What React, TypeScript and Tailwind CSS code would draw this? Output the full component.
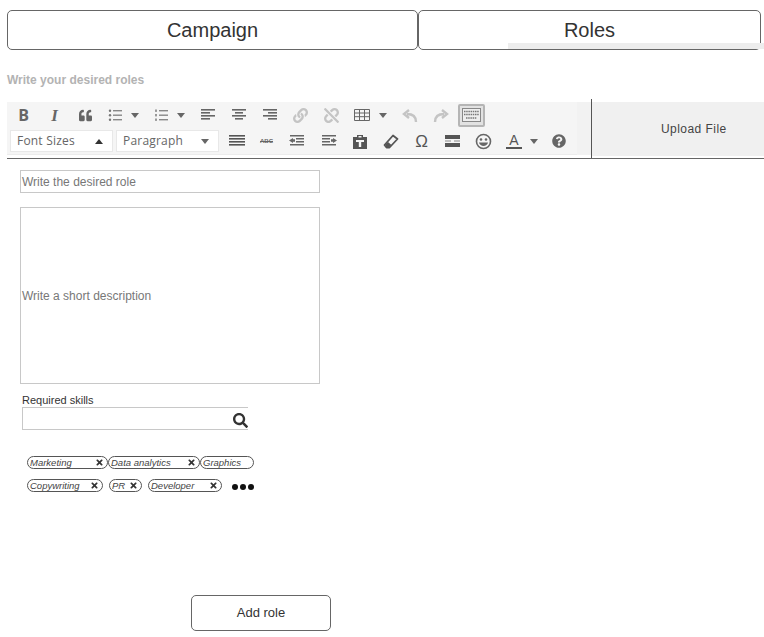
import { FaLink, FaUnlink, FaQuoteLeft, FaQuestionCircle, FaTimes, FaSearch } from "react-icons/fa";

function Lines({ rows, color = "#666" }: { rows: [number, number][]; color?: string }) {
    return (
        <svg width="16" height="14" viewBox="0 0 16 14">
            {rows.map((r, i) => (
                <rect key={i} x={r[0]} y={1 + i * 3} width={r[1]} height="1.6" fill={color} />
            ))}
        </svg>
    );
}

function Btn({ w = "w-[31px]", ml = "", children }: { w?: string; ml?: string; children: React.ReactNode }) {
    return <div className={`${w} ${ml} h-[24px] flex justify-center items-center shrink-0 text-[#666]`}>{children}</div>;
}

function Caret({ up }: { up?: boolean }) {
    return (
        <svg width="8" height="5" viewBox="0 0 8 5">
            <path d={up ? "M0 5 L4 0 L8 5 Z" : "M0 0 L8 0 L4 5 Z"} fill={up ? "#333" : "#666"} />
        </svg>
    );
}

function ListIcon({ numbered }: { numbered?: boolean }) {
    return (
        <svg width="14" height="13" viewBox="0 0 14 13">
            {[1, 5.5, 10].map((y) => (
                <g key={y}>
                    {numbered ? <rect x="1" y={y - 0.5} width="2" height="2.4" fill="#999" /> : <circle cx="2" cy={y + 0.7} r="1.2" fill="#777" />}
                    <rect x="5" y={y} width="9" height="1.4" fill="#888" />
                </g>
            ))}
        </svg>
    );
}

function Dropdown({ label, up, w }: { label: string; up?: boolean; w: string }) {
    return (
        <div className={`${w} h-[22px] bg-white border border-[#e8e8e8] flex items-center justify-between pl-[6px] pr-[9px] text-[12px] tracking-[0.2px] text-[#666] font-['Open_Sans',sans-serif] shrink-0`}>
            <span>{label}</span>
            <Caret up={up} />
        </div>
    );
}

function Arrow({ flip }: { flip?: boolean }) {
    return (
        <svg width="16" height="15" viewBox="0 0 16 15" className={flip ? "-scale-x-100" : ""}>
            <path d="M14 14 C14 8 10 6 5 6 M7 2 L2 6 L7 10" fill="none" stroke="#c4c4c4" strokeWidth="2.4" />
        </svg>
    );
}

function Indent({ flip }: { flip?: boolean }) {
    return (
        <svg width="16" height="14" viewBox="0 0 16 14" className={flip ? "-scale-x-100" : ""}>
            <rect x="1" y="1" width="14" height="1.5" fill="#666" />
            <rect x="7" y="4" width="8" height="1.5" fill="#666" />
            <rect x="7" y="7" width="8" height="1.5" fill="#666" />
            <rect x="1" y="10" width="14" height="1.5" fill="#666" />
            <path d="M0 6.5 L4 4 V5.3 H6 V7.7 H4 V9 Z" fill="#666" />
        </svg>
    );
}

function Tag({ label, w, close = true }: { label: string; w: string; close?: boolean }) {
    return (
        <div className={`${w} h-[13px] border border-[#555] rounded-full flex items-center justify-between pl-[2px] pr-[3px] text-[9.5px] italic text-[#444] shrink-0`}>
            <span className="mt-[1px]">{label}</span>
            {close && <FaTimes size={9} className="text-[#333]" />}
        </div>
    );
}

export default function App() {
    return (
        <div className="w-[764px] h-[637px] overflow-hidden bg-white font-['Liberation_Sans',Arial,sans-serif] text-[#333] pt-[10px]">
            <div className="flex pl-[7px]">
                <div className="w-[411px] h-[40px] border border-[#666] rounded-[5px] flex justify-center items-center text-[20px]">Campaign</div>
                <div className="relative w-[343px] h-[40px] border border-[#666] rounded-[5px] flex justify-center items-center text-[20px] pb-[1px]">
                    Roles
                    <div className="absolute left-[89px] top-[32px] w-[256px] h-[6px] bg-[#ededed]"></div>
                </div>
            </div>

            <p className="mt-[23px] pl-[7px] text-[12px] leading-[14px] font-bold text-[#b3b3b3]">Write your desired roles</p>

            <div className="mt-[12px] ml-[7px] flex h-[60px] border-b border-[#666]">
                <div className="w-[584px] mt-[3px] h-[54px] flex">
                    <div className="w-[570px] h-[53px] bg-[#f5f5f5] border-b border-[#ececec] pt-[1px]">
                        <div className="flex items-center pl-[1px]">
                            <Btn><span className="font-['Open_Sans',sans-serif] text-[16px] font-bold leading-none">B</span></Btn>
                            <Btn><span className="font-['Liberation_Serif',serif] text-[17px] italic font-bold leading-none">I</span></Btn>
                            <Btn><FaQuoteLeft size={13} /></Btn>
                            <Btn w="w-[28px]"><ListIcon /></Btn>
                            <Btn w="w-[12px]"><Caret /></Btn>
                            <Btn w="w-[30px]" ml="ml-[5px]"><ListIcon numbered /></Btn>
                            <Btn w="w-[10px]"><Caret /></Btn>
                            <Btn ml="ml-[6px]"><Lines rows={[[1, 14], [1, 9], [1, 14], [1, 9]]} /></Btn>
                            <Btn><Lines rows={[[1, 14], [4, 8], [1, 14], [4, 8]]} /></Btn>
                            <Btn><Lines rows={[[1, 14], [6, 9], [1, 14], [6, 9]]} /></Btn>
                            <Btn><FaLink size={15} className="text-[#c4c4c4]" /></Btn>
                            <Btn><FaUnlink size={15} className="text-[#c4c4c4]" /></Btn>
                            <Btn w="w-[30px]">
                                <svg width="16" height="12" viewBox="0 0 16 12">
                                    <path d="M0.5 0.5 H15.5 V11.5 H0.5 Z M0.5 4 H15.5 M0.5 7.7 H15.5 M5.5 0.5 V11.5 M10.5 0.5 V11.5" fill="none" stroke="#666" />
                                </svg>
                            </Btn>
                            <Btn w="w-[12px]"><Caret /></Btn>
                            <Btn ml="ml-[5px]"><Arrow /></Btn>
                            <Btn><Arrow flip /></Btn>
                            <div className="w-[27px] h-[23px] ml-[2px] shrink-0 border-2 border-[#b5b5b5] rounded-[2px] bg-[#e2e2e2] flex justify-center items-center">
                                <svg width="19" height="14" viewBox="0 0 19 14">
                                    <rect x="0.5" y="0.5" width="18" height="13" fill="#eee" stroke="#888" />
                                    <path d="M2 3.5 H17 M2 6.5 H17 M4 10 H15" stroke="#777" strokeWidth="1.6" strokeDasharray="1.5 0.7" />
                                </svg>
                            </div>
                        </div>
                        <div className="flex items-center pl-[3px] mt-[2px]">
                            <Dropdown label="Font Sizes" up w="w-[103px]" />
                            <div className="w-[3px] shrink-0"></div>
                            <Dropdown label="Paragraph" w="w-[103px]" />
                            <Btn w="w-[35px]"><Lines rows={[[0, 16], [0, 16], [0, 16], [0, 16]]} color="#555" /></Btn>
                            <Btn w="w-[25px]"><span className="text-[6px] font-bold line-through">ABC</span></Btn>
                            <Btn w="w-[35px]"><Indent /></Btn>
                            <Btn w="w-[30px]"><Indent flip /></Btn>
                            <Btn>
                                <svg width="16" height="15" viewBox="0 0 16 15">
                                    <path d="M1 3 H5 V1 H11 V3 H15 V15 H1 Z" fill="#555" />
                                    <rect x="6.5" y="2" width="3" height="1.5" fill="#f5f5f5" />
                                    <path d="M4 6 H12 V8 H9.2 V13 H6.8 V8 H4 Z" fill="#f5f5f5" />
                                </svg>
                            </Btn>
                            <Btn>
                                <svg width="16" height="15" viewBox="0 0 16 15">
                                    <path d="M10 1.5 L14.5 5 L6.5 13.5 H3.5 L1.5 11 Z" fill="#f5f5f5" stroke="#555" strokeWidth="1.8" strokeLinejoin="round" />
                                    <path d="M2 11 L5 8 L8.5 11 L6 13.5 H3.5 Z" fill="#555" />
                                </svg>
                            </Btn>
                            <Btn><span className="font-['Liberation_Sans',sans-serif] text-[17px] text-[#555] leading-none">Ω</span></Btn>
                            <Btn>
                                <svg width="15" height="12" viewBox="0 0 15 12">
                                    <rect y="0" width="15" height="4" fill="#555" />
                                    <rect y="8" width="15" height="4" fill="#555" />
                                    <rect y="5.5" width="6" height="1" fill="#888" />
                                    <rect x="9" y="5.5" width="6" height="1" fill="#888" />
                                </svg>
                            </Btn>
                            <Btn>
                                <svg width="17" height="17" viewBox="0 0 17 17">
                                    <circle cx="8.5" cy="8.5" r="7" fill="none" stroke="#666" strokeWidth="1.6" />
                                    <circle cx="6" cy="6.5" r="1.3" fill="#666" />
                                    <circle cx="11" cy="6.5" r="1.3" fill="#666" />
                                    <path d="M4 9.5 C5 14 12 14 13 9.5 Z" fill="#666" />
                                </svg>
                            </Btn>
                            <Btn w="w-[30px]">
                                <span className="text-[14px] leading-[14px] border-b-2 border-[#555] px-[3px] text-[#555]">A</span>
                            </Btn>
                            <Btn w="w-[10px]"><Caret /></Btn>
                            <Btn w="w-[40px]"><FaQuestionCircle size={14} /></Btn>
                        </div>
                    </div>
                    <div className="w-[14px] h-[53px] bg-[#f2f2f2]"></div>
                </div>
                <div className="w-[173px] pt-[3px] pb-[2px] border-l border-[#555]">
                    <div className="h-full bg-[#f0f0f0] flex items-center pl-[69px] text-[12px] tracking-[0.45px] text-[#444]">Upload File</div>
                </div>
            </div>

            <div className="pl-[20px]">
                <div className="mt-[11px] w-[300px] h-[23px] border border-[#c8c8c8] flex items-center pl-[1px] text-[12px] text-[#777]">Write the desired role</div>
                <div className="mt-[14px] w-[300px] h-[177px] border border-[#c8c8c8] flex items-center pl-[1px] text-[12px] text-[#777]">Write a short description</div>
                <p className="mt-[10px] pl-[2px] text-[11px] leading-[13px]">Required skills</p>
                <div className="ml-[2px] w-[226px] h-[23px] border border-[#c8c8c8] border-r-0 flex items-center justify-end">
                    <FaSearch size={15} className="text-[#333] mt-[3px]" />
                </div>
                <div className="mt-[26px] ml-[7px] flex">
                    <Tag label="Marketing" w="w-[81px]" />
                    <Tag label="Data analytics" w="w-[92px]" />
                    <Tag label="Graphics" w="w-[54px]" close={false} />
                </div>
                <div className="mt-[10px] ml-[7px] flex items-center">
                    <Tag label="Copywriting" w="w-[76px]" />
                    <div className="w-[6px] shrink-0"></div>
                    <Tag label="PR" w="w-[33px]" />
                    <div className="w-[6px] shrink-0"></div>
                    <Tag label="Developer" w="w-[74px]" />
                    <div className="ml-[10px] mt-[3px] flex gap-[2px]">
                        <div className="w-[6px] h-[6px] rounded-full bg-[#111]"></div>
                        <div className="w-[6px] h-[6px] rounded-full bg-[#111]"></div>
                        <div className="w-[6px] h-[6px] rounded-full bg-[#111]"></div>
                    </div>
                </div>
            </div>

            <div className="mt-[103px] ml-[191px] w-[140px] h-[36px] border border-[#666] rounded-[5px] flex justify-center items-center text-[13px]">Add role</div>
        </div>
    );
}
